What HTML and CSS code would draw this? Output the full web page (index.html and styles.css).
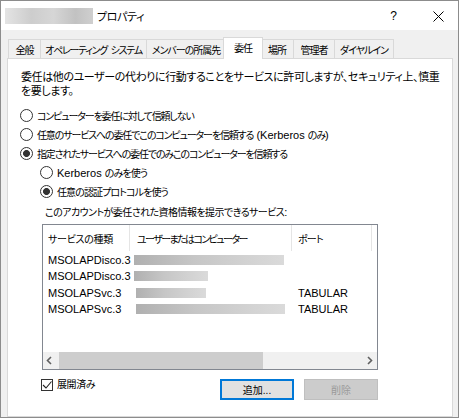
FILE: index.html
```html
<!DOCTYPE html>
<html lang="ja">
<head>
<meta charset="utf-8">
<title>プロパティ</title>
<link rel="stylesheet" href="styles.css">
</head>
<body>
<div class="window">
  <div class="titlebar">
    <div class="title-blur"></div>
    <span class="title">プロパティ</span>
    <span class="help">?</span>
    <svg class="close" width="11" height="11" viewBox="0 0 11 11"><path d="M0.5 0.5 L10.5 10.5 M10.5 0.5 L0.5 10.5" stroke="#000" stroke-width="1" fill="none"/></svg>
  </div>
  <div class="body">
    <div class="tabs">
      <div class="tab tab-general">全般</div>
      <div class="tab tab-os">オペレーティング&ensp;システム</div>
      <div class="tab tab-member">メンバーの所属先</div>
      <div class="tab tab-deleg selected">委任</div>
      <div class="tab tab-place">場所</div>
      <div class="tab tab-admin">管理者</div>
      <div class="tab tab-dial">ダイヤルイン</div>
    </div>
    <div class="panel">
      <p class="desc">委任は他のユーザーの代わりに行動することをサービスに許可しますが、セキュリティ上、慎重<br>を要します。</p>
      <div class="options">
        <div class="radio"><span class="circle"></span>コンピューターを委任に対して信頼しない</div>
        <div class="radio"><span class="circle"></span>任意のサービスへの委任でこのコンピューターを信頼する<span class="lat"> (Kerberos </span>のみ<span class="lat">)</span></div>
        <div class="radio"><span class="circle checked"></span>指定されたサービスへの委任でのみこのコンピューターを信頼する</div>
        <div class="radio sub"><span class="circle"></span><span class="lat">Kerberos </span>のみを使う</div>
        <div class="radio sub"><span class="circle checked"></span>任意の認証プロトコルを使う</div>
      </div>
      <p class="services-label">このアカウントが委任された資格情報を提示できるサービス<span class="lat">:</span></p>
      <div class="listbox">
        <div class="lv-header">
          <div class="hcell c1">サービスの種類</div>
          <div class="hcell c2">ユーザーまたはコンピューター</div>
          <div class="hcell c3">ポート</div>
        </div>
        <div class="lv-rows">
          <div class="lv-row"><span class="cell c1">MSOLAPDisco.3</span><span class="cell c2"><span class="blur" style="width:150px"></span></span><span class="cell c3"></span></div>
          <div class="lv-row"><span class="cell c1">MSOLAPDisco.3</span><span class="cell c2"><span class="blur" style="width:74px"></span></span><span class="cell c3"></span></div>
          <div class="lv-row"><span class="cell c1">MSOLAPSvc.3</span><span class="cell c2 shift"><span class="blur" style="width:70px"></span></span><span class="cell c3">TABULAR</span></div>
          <div class="lv-row"><span class="cell c1">MSOLAPSvc.3</span><span class="cell c2 shift"><span class="blur" style="width:149px"></span></span><span class="cell c3">TABULAR</span></div>
        </div>
        <div class="hscroll">
          <span class="arrow"><svg width="16" height="17" viewBox="0 0 16 17"><path d="M8 5 L4.5 8.5 L8 12" stroke="#606060" stroke-width="1.6" fill="none"/></svg></span>
          <span class="thumb"></span>
          <span class="track"></span>
          <span class="arrow"><svg width="17" height="17" viewBox="0 0 17 17"><path d="M8 5 L11.5 8.5 L8 12" stroke="#606060" stroke-width="1.6" fill="none"/></svg></span>
        </div>
      </div>
      <div class="controls">
        <div class="check">
          <span class="checkbox"><svg width="10" height="10" viewBox="0 0 10 10"><path d="M1 5 L4 8 L9.5 1.5" stroke="#222" stroke-width="1.1" fill="none"/></svg></span>
          <span class="check-text">展開済み</span>
        </div>
        <div class="buttons">
          <button class="btn default">追加...</button>
          <button class="btn disabled">削除</button>
        </div>
      </div>
    </div>
  </div>
</div>
</body>
</html>
```
FILE: styles.css
```css
* { box-sizing: border-box; }
html, body { margin: 0; padding: 0; background: #fff; }
body {
  font-family: "Liberation Sans", "Noto Sans CJK JP", sans-serif;
  font-size: 10px;
  color: #000;
  font-feature-settings: "palt";
}
.lat { font-size: 11px; letter-spacing: 0; }
.window {
  width: 459px;
  height: 418px;
  border: 1px solid #8c8c8c;
  display: flex;
  flex-direction: column;
  overflow: hidden;
}
.titlebar {
  height: 29px;
  flex: none;
  background: #fff;
  display: flex;
  align-items: center;
}
.title-blur {
  width: 88px;
  height: 16px;
  margin-left: 4px;
  background: linear-gradient(90deg, #e4e4e4, #cdcdcd 30%, #d6d6d6 55%, #c2c2c2 80%, #cfcfcf);
}
.title { margin-left: 4px; font-size: 11px; letter-spacing: -0.4px; }
.help { margin-left: auto; margin-right: 36px; font-size: 12px; }
.close { margin-right: 14px; margin-top: 2px; }

.body {
  flex: 1;
  background: #f0f0f0;
  padding: 9px 5px 0 6px;
  display: flex;
  flex-direction: column;
}
.tabs {
  display: flex;
  align-items: flex-end;
  height: 19px;
  flex: none;
}
.tab {
  height: 19px;
  border: 1px solid #d9d9d9;
  border-bottom: none;
  margin-left: -1px;
  display: flex;
  align-items: center;
  justify-content: center;
  background: #f0f0f0;
  white-space: nowrap;
  letter-spacing: -1px;
}
.tab-general { width: 33px; margin-left: 1px; }
.tab-os { width: 107px; letter-spacing: -1.3px; }
.tab-member { width: 80px; }
.tab-deleg { width: 40px; }
.tab-place { width: 34px; }
.tab-admin { width: 42px; }
.tab-dial { width: 60px; }
.tab.selected {
  position: relative;
  z-index: 1;
  height: 22px;
  margin-left: -3px;
  margin-right: -2px;
  margin-bottom: -1px;
  background: #fff;
  padding-bottom: 2px;
}
.panel {
  flex: 1;
  background: #fff;
  border: 1px solid #d9d9d9;
  padding: 11px 0 0 13px;
}
.desc { margin: 0; line-height: 14px; font-size: 11px; letter-spacing: -0.4px; white-space: nowrap; }
.options { margin-top: 8px; }
.radio {
  display: flex;
  align-items: center;
  height: 19px;
  white-space: pre;
  letter-spacing: -1.15px;
}
.circle {
  width: 13px;
  height: 13px;
  border: 1px solid #333;
  border-radius: 50%;
  margin-left: -1px;
  margin-right: 4px;
  background: #fff;
  flex: none;
}
.circle.checked {
  background: radial-gradient(circle, #333 3.1px, #fff 3.8px);
}
.radio.sub { letter-spacing: -0.9px; }
.radio.sub .circle { margin-left: 19px; }
.services-label { margin: 4px 0 0 24px; line-height: 14px; letter-spacing: -0.55px; white-space: nowrap; }

.listbox {
  margin: 4px 0 0 21px;
  width: 336px;
  height: 146px;
  border: 1px solid #828790;
  display: flex;
  flex-direction: column;
  background: #fff;
}
.lv-header {
  display: grid;
  grid-template-columns: 87px 162px 80px;
  height: 26px;
  flex: none;
}
.hcell {
  border-right: 1px solid #e5e5e5;
  display: flex;
  align-items: center;
  white-space: nowrap;
  letter-spacing: -0.7px;
}
.hcell.c1 { padding-left: 5px; letter-spacing: -0.3px; }
.hcell.c2 { padding-left: 7px; letter-spacing: -1.6px; }
.hcell.c3 { padding-left: 6px; }
.lv-rows { flex: 1; padding-top: 1px; }
.lv-row {
  display: grid;
  grid-template-columns: 87px 162px 80px;
  height: 16.33px;
  align-items: center;
  white-space: nowrap;
  font-size: 11px;
}
.cell.c1 { padding-left: 5px; }
.cell.c2 { padding-left: 4px; display: flex; align-items: center; }
.cell.c2.shift { padding-left: 6px; }
.cell.c3 { padding-left: 6px; }
.blur {
  display: block;
  height: 10px;
  background: linear-gradient(90deg, #b0b0b0, #c6c6c6 40%, #d2d2d2 75%, #dadada);
}
.hscroll {
  height: 17px;
  flex: none;
  display: flex;
  background: #f0f0f0;
}
.arrow { display: flex; flex: none; }
.thumb { width: 204px; background: #cdcdcd; flex: none; }
.track { flex: 1; }

.controls {
  margin: 9px 0 0 20px;
  width: 337px;
  display: flex;
  justify-content: space-between;
  align-items: flex-start;
}
.check { display: flex; align-items: center; gap: 4px; line-height: 12px; }
.check-text { letter-spacing: -0.4px; }
.checkbox {
  width: 12px;
  height: 12px;
  border: 1px solid #333;
  display: flex;
  align-items: center;
  justify-content: center;
  background: #fff;
}
.buttons { display: flex; gap: 10px; }
.btn {
  width: 74px;
  height: 21px;
  font: inherit;
  padding: 0;
  margin: 0;
}
.btn.default { background: #e1e1e1; border: 2px solid #0078d7; color: #000; }
.btn.disabled { background: #cccccc; border: 1px solid #bfbfbf; color: #9a9a9a; }
```
